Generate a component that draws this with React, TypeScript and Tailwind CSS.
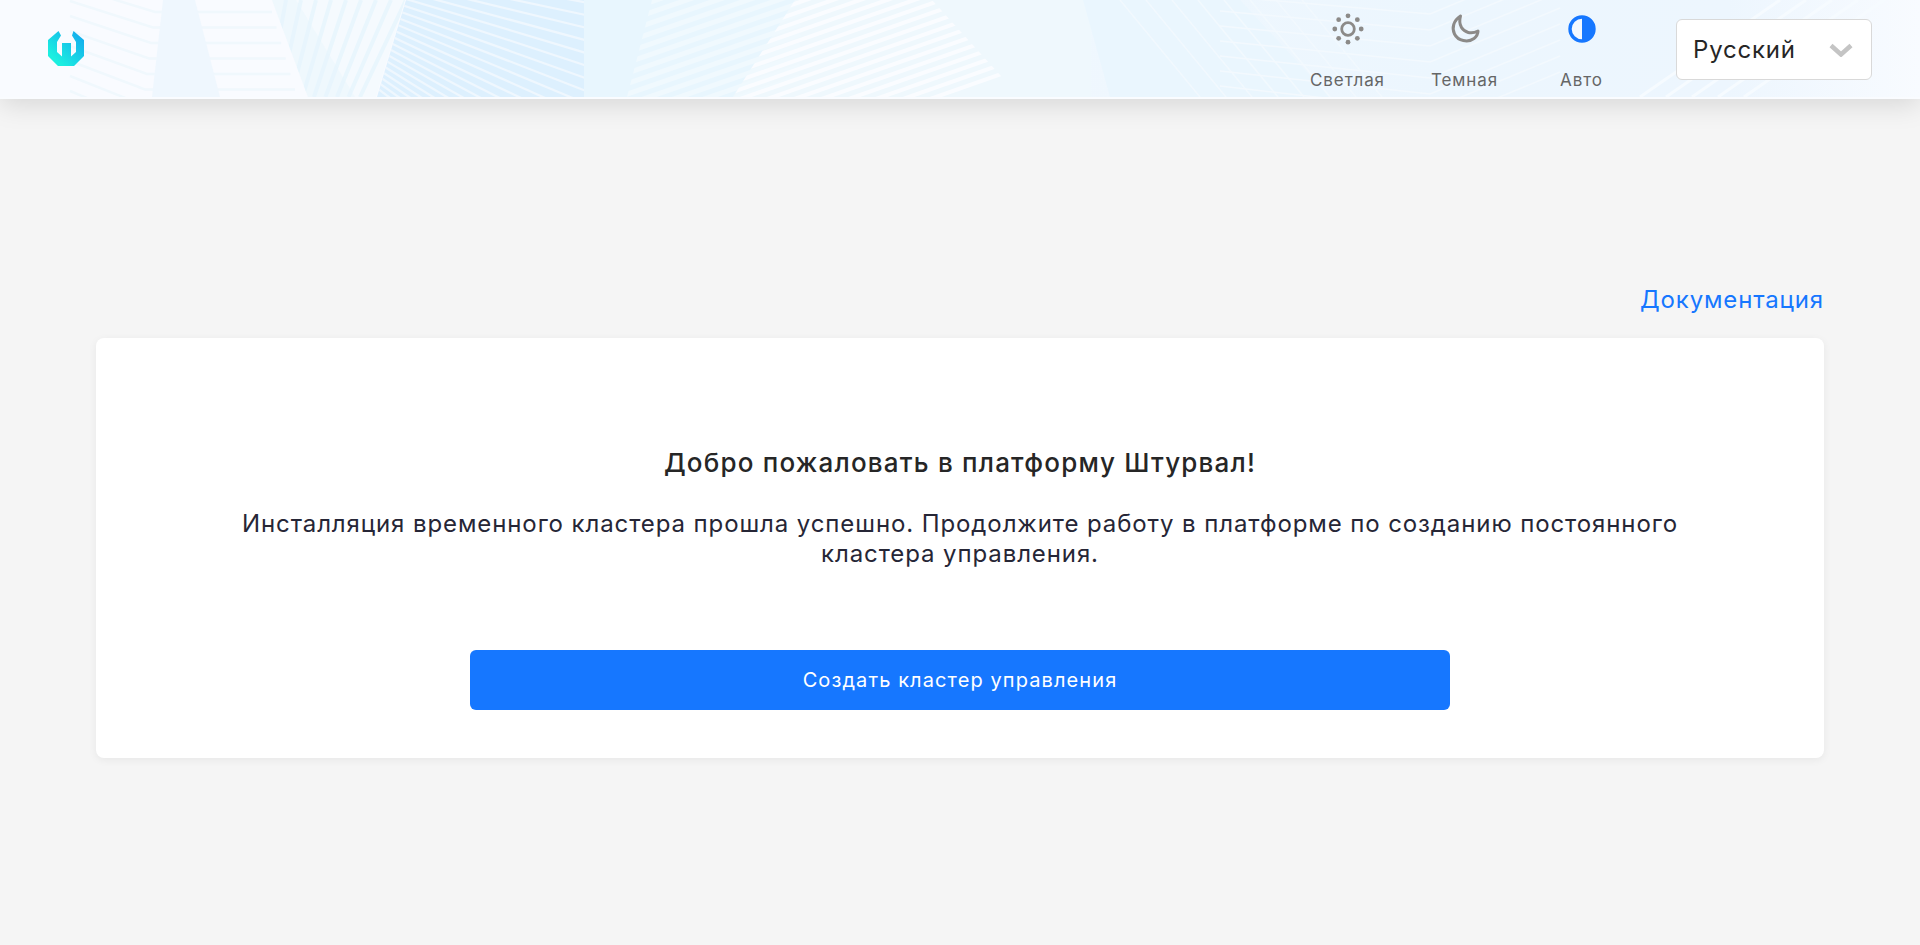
const range = (n: number) => Array.from({ length: n }, (_, i) => i);

function HeaderPattern() {
  return (
    <svg className="absolute inset-0 h-[97px] w-full" viewBox="0 0 1920 97" preserveAspectRatio="none">
      <defs>
        <linearGradient id="headerBase" x1="0" y1="0" x2="1" y2="0">
          <stop offset="0" stopColor="#fbfcff" />
          <stop offset="0.3" stopColor="#f4f9fe" />
          <stop offset="0.75" stopColor="#ecf6fe" />
          <stop offset="0.9" stopColor="#edf6fe" />
          <stop offset="1" stopColor="#f8fbff" />
        </linearGradient>
        <clipPath id="fanClip">
          <polygon points="272,0 405,0 376,97 308,97" />
        </clipPath>
        <clipPath id="blueClip">
          <polygon points="406,0 592,0 585,97 377,97" />
        </clipPath>
        <clipPath id="barsClip">
          <polygon points="652,0 932,0 1020,97 627,97" />
        </clipPath>
        <clipPath id="lightBarsClip">
          <polygon points="795,0 932,0 1020,97 733,97" />
        </clipPath>
      </defs>
      <rect width="1920" height="97" fill="url(#headerBase)" />
      <rect width="600" height="97" fill="#f9fbff" />

      {/* left chevrons */}
      <g fill="none" stroke="#f0f8fd" strokeWidth="2.5">
        {range(8).map((i) => (
          <polyline
            key={i}
            points={`70,${-14 + i * 15} ${155 - i * 2},${12 + i * 15.5} ${272 + i * 4.6},${-30 + i * 15.5 + 42}`}
          />
        ))}
      </g>
      <polygon points="163,0 195,0 220,97 152,97" fill="#eff7fe" />

      {/* fan */}
      <polygon points="272,0 405,0 376,97 308,97" fill="#f5fafe" />
      <g clipPath="url(#fanClip)" stroke="#e9f6fd" strokeWidth="4">
        {range(9).map((i) => (
          <line key={i} x1={286 + i * 15} y1="0" x2={268 + i * 11.5} y2="97" />
        ))}
      </g>
      <polygon points="272,0 296,0 355,97 308,97" fill="#e6f5fd" opacity="0.4" />

      {/* blue stripes */}
      <polygon points="406,0 592,0 585,97 377,97" fill="#ddf0fe" />
      <g clipPath="url(#blueClip)" stroke="#eff7fe" strokeWidth="2.2">
        {range(24).map((i) => (
          <line key={i} x1="376" y1={-62 + i * 6.5} x2="588" y2={-48 + i * 12.7} />
        ))}
      </g>
      <rect x="584" width="54" height="97" fill="#e8f6fe" />

      {/* slanted bars */}
      <rect x="636" width="455" height="97" fill="#eff8fd" />
      <polygon points="600,0 660,0 627,97 600,97" fill="#e8f6fe" />
      <polygon points="650,0 795,0 733,97 627,97" fill="#e8f6fe" />
      <g clipPath="url(#barsClip)" stroke="#f0f9fe" strokeWidth="5">
        {range(14).map((i) => (
          <line key={i} x1="620" y1={10 + i * 10.5 - 8} x2="800" y2={-52 + i * 10.5 - 8} />
        ))}
      </g>
      <g clipPath="url(#lightBarsClip)" stroke="#fafcff" strokeWidth="4">
        {range(16).map((i) => (
          <line key={i} x1="720" y1={i * 9.5 + 30} x2="1040" y2={i * 9.5 - 82} />
        ))}
      </g>

      {/* right side */}
      <polygon points="1083,0 1240,0 1330,97 1110,97" fill="#eaf6fe" />
      <g fill="none" stroke="#f2f9fe" strokeWidth="1.5">
        {range(8).map((i) => (
          <line key={i} x1={1120 + i * 26} y1="0" x2={1200 + i * 26} y2="97" />
        ))}
      </g>
      <g fill="none" stroke="#f3f9fe" strokeWidth="1.5">
        {range(8).map((i) => (
          <polyline
            key={i}
            points={`1220,${-4 + i * 15} 1430,${14 + i * 16} 1560,${-40 + i * 16}`}
          />
        ))}
      </g>
      <g stroke="#f6fbff" strokeWidth="3">
        {range(5).map((i) => (
          <line key={i} x1={1640 + i * 26} y1="97" x2={1780 + i * 26} y2="0" />
        ))}
      </g>
    </svg>
  );
}

function Logo() {
  return (
    <svg width="36" height="36" viewBox="48 32 36 36">
      <defs>
        <linearGradient id="logoFill" x1="0" y1="1" x2="1" y2="0">
          <stop offset="0.2" stopColor="#1cefe0" />
          <stop offset="1" stopColor="#12a4ef" />
        </linearGradient>
      </defs>
      <path
        d="M58.5 32 L61 36.5 L57 43 L57 53 L62 57.5 L62 44 L71 44 L71 57.5 L76 53 L76 43 L72 36.5 L73.5 32 L84 41 L84 57 L74 67 L58 67 L48 57 L48 41 Z"
        fill="url(#logoFill)"
      />
    </svg>
  );
}

function SunIcon() {
  return (
    <svg width="32" height="32" viewBox="0 0 32 32" fill="#8c8a88">
      <circle cx="16" cy="16" r="6.3" fill="none" stroke="#8c8a88" strokeWidth="2.8" />
      {range(8).map((i) => {
        const a = (i * Math.PI) / 4;
        return <circle key={i} cx={16 + 13.2 * Math.cos(a)} cy={16 + 13.2 * Math.sin(a)} r="2.4" />;
      })}
    </svg>
  );
}

function MoonIcon() {
  return (
    <svg width="32" height="32" viewBox="0 0 32 32" fill="none">
      <path
        d="M11.5 3 C4.5 7.5 2.5 15 5.5 21 C9 28 19 30 25 25.5 C27.5 23.5 29 20.5 29 18 C22 21.5 15.5 19.5 12.5 14.5 C10.5 11 10.3 7 11.5 3 Z"
        stroke="#8c8a88"
        strokeWidth="3"
        strokeLinejoin="round"
      />
    </svg>
  );
}

function AutoIcon() {
  return (
    <svg width="32" height="32" viewBox="0 0 32 32">
      <circle cx="16" cy="16" r="12" fill="#f3f8ff" stroke="#1677ff" strokeWidth="3.4" />
      <path d="M16 3 A13 13 0 0 1 16 29 Z" fill="#1677ff" />
    </svg>
  );
}

function ThemeOption({ label, children }: { label: string; children: React.ReactNode }) {
  return (
    <div className="flex w-[117px] flex-col items-center">
      <div className="flex h-[32px] items-center justify-center">{children}</div>
      <span className="mt-[25px] text-[17px] leading-[20px] tracking-[0.9px] text-[#666666]">{label}</span>
    </div>
  );
}

export default function App() {
  return (
    <div className="min-h-[945px] bg-[#f5f5f5] font-['Inter','Noto_Sans',sans-serif]">
      <header className="relative flex h-[99px] items-center justify-between border-b-2 border-[#fafcff] pl-[48px] pr-[48px] shadow-[0_5px_26px_rgba(0,0,0,0.13)]">
        <HeaderPattern />
        <div className="relative flex">
          <Logo />
        </div>
        <div className="relative flex items-center">
          <div className="mr-[36px] flex pt-[6px]">
            <ThemeOption label="Светлая">
              <SunIcon />
            </ThemeOption>
            <ThemeOption label="Темная">
              <MoonIcon />
            </ThemeOption>
            <ThemeOption label="Авто">
              <AutoIcon />
            </ThemeOption>
          </div>
          <div className="mt-[2px] flex h-[61px] w-[196px] items-center justify-between rounded-[6px] border border-[#d9d9d9] bg-white pl-[16px] pr-[18px]">
            <span className="text-[24px] tracking-[0.8px] text-[#262626]">Русский</span>
            <svg width="24" height="14" viewBox="0 0 24 14" fill="none">
              <path d="M2 2.5 L12 11.5 L22 2.5" stroke="#c4c4c4" strokeWidth="4.5" />
            </svg>
          </div>
        </div>
      </header>

      <main className="px-[96px] pt-[186px]">
        <div className="mb-[23px] text-right text-[24px] leading-[30px] tracking-[0.85px] text-[#1677ff]">Документация</div>
        <section className="flex flex-col items-center rounded-[8px] bg-white px-[120px] pb-[48px] pt-[110px] shadow-[0_2px_8px_rgba(0,0,0,0.06)]">
          <h1 className="text-[26px] font-medium leading-[30px] tracking-[1.2px] text-[#262626]">
            Добро пожаловать в платформу Штурвал!
          </h1>
          <p className="mt-[31px] text-center text-[24px] leading-[30px] tracking-[0.9px] text-[#262636]">
            Инсталляция временного кластера прошла успешно. Продолжите работу в платформе по созданию постоянного
            кластера управления.
          </p>
          <button className="mt-[81px] h-[60px] w-[980px] rounded-[6px] bg-[#1677ff] text-[20px] tracking-[1.1px] text-white">
            Создать кластер управления
          </button>
        </section>
      </main>
    </div>
  );
}
